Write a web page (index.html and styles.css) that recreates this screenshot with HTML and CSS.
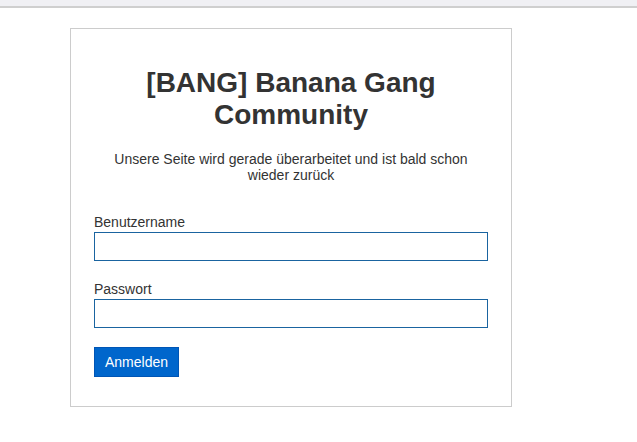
FILE: index.html
```html
<!DOCTYPE html>
<html lang="de">
<head>
    <meta charset="UTF-8">
    <meta name="viewport" content="width=device-width, initial-scale=1.0">
    <link rel="stylesheet" href="styles.css">
    <title>[BANG] Banana Gang Community</title>
</head>
<body>
    <div class="topbar"></div>

    <div class="page">
        <div class="login">
            <h1>[BANG] Banana Gang Community</h1>
            <p class="notice">Unsere Seite wird gerade überarbeitet und ist bald schon wieder zurück</p>

            <form class="login__form">
                <div class="field">
                    <label for="username">Benutzername</label>
                    <input type="text" id="username" name="username">
                </div>
                <div class="field">
                    <label for="password">Passwort</label>
                    <input type="password" id="password" name="password">
                </div>
                <button type="submit">Anmelden</button>
            </form>
        </div>
    </div>
</body>
</html>
```

FILE: styles.css
```css
/* Grundschrift */
body {
    font-family: "Liberation Sans", Arial, sans-serif;
    background-color: #ffffff;
    margin: 0;
    padding: 0;
    color: #333;
}

/* Leiste oben */
.topbar {
    height: 6px;
    background-color: #f0f0f4;
    border-bottom: 2px solid #cfcfcf;
}

.page {
    padding: 20px 0 0 70px;
}

/* Login-Box */
.login {
    width: 442px;
    box-sizing: border-box;
    border: 1px solid #cccccc;
    padding: 38px 23px 29px;
    text-align: center;
}

h1 {
    font-size: 28px;
    font-weight: bold;
    margin: 0;
    color: #333;
}

.notice {
    font-size: 14px;
    margin: 20px 0 0;
}

.login__form {
    margin-top: 31px;
    text-align: left;
}

.field {
    margin-bottom: 20px;
}

.field:last-of-type {
    margin-bottom: 19px;
}

label {
    display: block;
    font-size: 14px;
    margin-bottom: 2px;
}

input {
    display: block;
    width: 100%;
    height: 29px;
    box-sizing: border-box;
    border: 1px solid #1a64a0;
    padding: 4px 6px;
    font-size: 14px;
    font-family: inherit;
}

button {
    background-color: #0066cc;
    color: white;
    border: 1px solid #0055b5;
    height: 30px;
    width: 85px;
    padding: 0;
    font-size: 14px;
    font-family: inherit;
    cursor: pointer;
}

button:hover {
    background-color: #0059b3;
}
```
